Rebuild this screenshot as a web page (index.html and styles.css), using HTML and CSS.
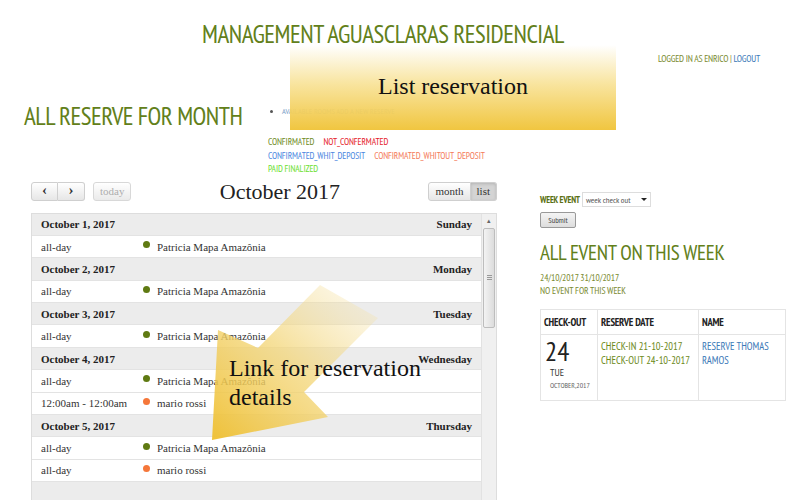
FILE: index.html
```html
<!DOCTYPE html>
<html>
<head>
<meta charset="utf-8">
<link rel="stylesheet" href="styles.css">
</head>
<body>
<div class="page">
  <h1 class="site-title">MANAGEMENT AGUASCLARAS RESIDENCIAL</h1>
  <div class="login">LOGGED IN AS ENRICO | <a class="link">LOGOUT</a></div>

  <div class="top-row">
    <h2 class="section-title">ALL RESERVE FOR MONTH</h2>
    <div class="top-side">
      <ul class="actions"><li><a class="link">AVAILABLE ROOMS</a> <a class="link">ADD A NEW RESERVE</a></li></ul>
      <div class="legend">
        <div><span class="lg-green">CONFIRMATED</span><span class="lg-red">NOT_CONFERMATED</span></div>
        <div><span class="lg-blue">CONFIRMATED_WHIT_DEPOSIT</span><span class="lg-orange">CONFIRMATED_WHITOUT_DEPOSIT</span></div>
        <div><span class="lg-lime">PAID FINALIZED</span></div>
      </div>
    </div>
  </div>

  <div class="main">
    <div class="calendar">
      <div class="toolbar">
        <div class="tb-left">
          <div class="btn-group">
            <span class="btn">&#8249;</span><span class="btn">&#8250;</span>
          </div>
          <span class="btn btn-disabled">today</span>
        </div>
        <div class="cal-title">October 2017</div>
        <div class="btn-group">
          <span class="btn">month</span><span class="btn btn-active">list</span>
        </div>
      </div>
      <div class="list-wrap">
        <div class="list">
          <div class="day"><span>October 1, 2017</span><span>Sunday</span></div>
          <div class="ev"><span>all-day</span><i class="dot green"></i><span>Patricia Mapa Amazônia</span></div>
          <div class="day"><span>October 2, 2017</span><span>Monday</span></div>
          <div class="ev"><span>all-day</span><i class="dot green"></i><span>Patricia Mapa Amazônia</span></div>
          <div class="day"><span>October 3, 2017</span><span>Tuesday</span></div>
          <div class="ev"><span>all-day</span><i class="dot green"></i><span>Patricia Mapa Amazônia</span></div>
          <div class="day"><span>October 4, 2017</span><span>Wednesday</span></div>
          <div class="ev"><span>all-day</span><i class="dot green"></i><span>Patricia Mapa Amazônia</span></div>
          <div class="ev"><span>12:00am - 12:00am</span><i class="dot orange"></i><span>mario rossi</span></div>
          <div class="day"><span>October 5, 2017</span><span>Thursday</span></div>
          <div class="ev"><span>all-day</span><i class="dot green"></i><span>Patricia Mapa Amazônia</span></div>
          <div class="ev"><span>all-day</span><i class="dot orange"></i><span>mario rossi</span></div>
          <div class="day"><span></span><span></span></div>
        </div>
        <div class="scrollbar">
          <div class="sb-arrow">&#9652;</div>
          <div class="sb-thumb"><span class="sb-grip"></span></div>
        </div>
      </div>
    </div>

    <div class="sidebar">
      <form class="week-form">
        <div class="week-row">
          <label class="week-label">WEEK EVENT</label>
          <span class="select">week check out <span class="caret"></span></span>
        </div>
        <span class="submit">Submit</span>
      </form>
      <h3 class="side-title">ALL EVENT ON THIS WEEK</h3>
      <div class="side-text first">24/10/2017 31/10/2017</div>
      <div class="side-text">NO EVENT FOR THIS WEEK</div>
      <table class="events">
        <thead>
          <tr><th class="c1">CHECK-OUT</th><th class="c2">RESERVE DATE</th><th class="c3">NAME</th></tr>
        </thead>
        <tbody>
          <tr>
            <td class="date-cell">
              <div class="big-day">24</div>
              <div class="wd">TUE</div>
              <div class="mon">OCTOBER,2017</div>
            </td>
            <td class="olive">CHECK-IN 21-10-2017<br>CHECK-OUT 24-10-2017</td>
            <td><a class="link">RESERVE THOMAS RAMOS</a></td>
          </tr>
        </tbody>
      </table>
    </div>
  </div>
</div>

<div class="note note-list"><span>List reservation</span></div>

<div class="note-arrow">
  <svg width="200" height="180" viewBox="200 280 200 180">
    <defs>
      <linearGradient id="ag" x1="1" y1="0" x2="0" y2="1">
        <stop offset="0" stop-color="#f5e2a8" stop-opacity="0.15"/>
        <stop offset="0.5" stop-color="#f3d679" stop-opacity="0.75"/>
        <stop offset="1" stop-color="#efbf2f" stop-opacity="0.95"/>
      </linearGradient>
    </defs>
    <polygon points="320,285 378,318 304,392 328,417 212,440 218,330 258,348" fill="url(#ag)"/>
  </svg>
  <div class="arrow-text">Link for reservation<br>details</div>
</div>
</body>
</html>
```

FILE: styles.css
```css
html { overflow: hidden; }
body {
  margin: 0;
  background: #fff;
  font-family: "PT Sans Narrow", "Liberation Sans Narrow", "DejaVu Sans Condensed", "Roboto Condensed", "Liberation Sans", sans-serif;
  color: #333;
}
.page { width: 800px; }
.link { color: #3d7ab8; text-decoration: none; }

.site-title {
  margin: 0;
  padding: 20px 0 0 202px;
  font-size: 25px;
  font-weight: normal;
  color: #62801a;
  line-height: 28px;
  letter-spacing: -0.5px;
}
.login {
  text-align: right;
  padding-right: 40px;
  margin-top: 5px;
  font-size: 9.5px;
  color: #7a8a30;
  line-height: 12px;
  letter-spacing: -0.2px;
}
.top-row {
  display: flex;
  padding-left: 24px;
  margin-top: 36px;
}
.section-title {
  margin: 0;
  width: 244px;
  font-size: 25px;
  font-weight: normal;
  line-height: 30px;
  color: #62801a;
  letter-spacing: -0.5px;
}
.actions {
  margin: 0;
  padding: 0 0 0 14px;
  font-size: 8px;
  line-height: 12px;
  color: #555;
  margin-top: 4px;
}
.actions .link { color: #7aa0c8; }
.legend {
  margin-top: 19px;
  font-size: 9.3px;
  line-height: 13.5px;
  letter-spacing: -0.1px;
}
.legend span { margin-right: 9px; }
.lg-green { color: #6d8a1c; }
.lg-red { color: #e5202a; }
.lg-blue { color: #4a86e0; }
.lg-orange { color: #f47a5a; }
.lg-lime { color: #6be030; }

.main {
  display: flex;
  margin-top: 5px;
  align-items: flex-start;
}
.calendar {
  width: 466px;
  margin-left: 31px;
  font-family: "Liberation Serif", serif;
}
.toolbar {
  display: flex;
  justify-content: space-between;
  align-items: center;
  height: 20px;
}
.tb-left { display: flex; gap: 8px; }
.btn-group { display: flex; }
.btn {
  display: inline-block;
  height: 19px;
  box-sizing: border-box;
  padding: 0 6px;
  font-size: 11px;
  line-height: 17px;
  color: #333;
  border: 1px solid #cfcfcf;
  background: linear-gradient(#fff, #e6e6e6);
  border-radius: 3px;
}
.btn-group .btn { border-radius: 0; }
.btn-group .btn:first-child { border-radius: 3px 0 0 3px; }
.btn-group .btn:last-child { border-radius: 0 3px 3px 0; border-left: 0; }
.tb-left .btn-group .btn { width: 27px; text-align: center; padding: 0; font-size: 15px; line-height: 15px; font-weight: bold; }
.btn-disabled { color: #999; opacity: 0.8; }
.btn-active { background: #d4d4d4; box-shadow: inset 0 1px 3px rgba(0,0,0,0.15); }
.cal-title {
  font-size: 22px;
  color: #222;
}

.list-wrap {
  display: flex;
  margin-top: 11px;
  border: 1px solid #ddd;
  height: 300px;
}
.list { flex: 1; overflow: hidden; }
.day, .ev {
  height: 22.4px;
  box-sizing: border-box;
  border-bottom: 1px solid #e3e3e3;
  font-size: 11px;
  display: flex;
  align-items: center;
  padding: 0 9px;
}
.day {
  background: #ececec;
  justify-content: space-between;
  font-weight: bold;
  color: #222;
}
.ev { background: #fff; color: #333; }
.ev span:first-child { width: 102px; }
.dot {
  width: 7px; height: 7px; border-radius: 50%;
  margin-right: 7px;
  position: relative; top: -2px;
}
.dot.green { background: #5f7a12; }
.dot.orange { background: #f5773a; }

.scrollbar {
  width: 14px;
  background: #f0f0f0;
  border-left: 1px solid #e2e2e2;
  display: flex;
  flex-direction: column;
  align-items: center;
}
.sb-arrow { font-size: 7px; color: #666; height: 14px; line-height: 14px; }
.sb-thumb {
  width: 10px;
  height: 98px;
  border: 1px solid #bdbdbd;
  background: linear-gradient(90deg, #f3f3f3, #dcdcdc);
  border-radius: 2px;
  display: flex;
  align-items: center;
  justify-content: center;
}
.sb-grip { width: 5px; height: 5px; border-top: 1px solid #999; border-bottom: 1px solid #999; box-sizing: border-box; position: relative; }
.sb-grip::after { content: ""; position: absolute; left: 0; right: 0; top: 1px; border-top: 1px solid #999; }

.sidebar {
  margin-left: 43px;
  width: 246px;
  padding-top: 10px;
}
.week-row { display: flex; align-items: center; gap: 2px; }
.week-label { font-size: 9px; font-weight: bold; color: #5a7012; letter-spacing: -0.2px; }
.select {
  display: inline-flex;
  align-items: center;
  justify-content: space-between;
  width: 69px;
  height: 15px;
  box-sizing: border-box;
  border: 1px solid #ddd;
  font-size: 8.5px;
  color: #555;
  padding: 0 3px;
  gap: 3px;
}
.caret { width: 0; height: 0; border-left: 3px solid transparent; border-right: 3px solid transparent; border-top: 3px solid #222; }
.submit {
  display: inline-block;
  margin-top: 4px;
  width: 36px;
  height: 16px;
  box-sizing: border-box;
  border: 1px solid #999;
  border-radius: 2px;
  background: linear-gradient(#f4f4f4, #ddd);
  font-size: 8px;
  color: #444;
  text-align: center;
  line-height: 14px;
}
.side-title {
  margin: 13px 0 0;
  font-size: 21px;
  font-weight: normal;
  color: #62801a;
  line-height: 24px;
  letter-spacing: -0.3px;
}
.side-text { font-size: 9.5px; color: #7a8a30; line-height: 13px; letter-spacing: -0.1px; }
.side-text.first { margin-top: 6px; }
.events {
  margin-top: 12px;
  width: 246px;
  border-collapse: collapse;
  border: 1px solid #e4e4e4;
}
.events th {
  text-align: left;
  color: #222;
  font-weight: bold;
  font-size: 10.5px;
  letter-spacing: -0.2px;
  height: 24px;
  padding: 0 3px;
  border: 1px solid #e4e4e4;
}
.events td {
  vertical-align: top;
  border: 1px solid #e4e4e4;
  padding: 3px 3px 9px;
  line-height: 14px;
  font-size: 10.5px;
}
.c1 { width: 50px; }
.c2 { width: 94px; }
.olive { color: #6d8a1c; }
.events td.olive, .events td:last-child { padding-top: 4px; }
.date-cell { padding-left: 4px !important; }
.big-day { font-size: 27px; line-height: 26px; color: #222; }
.wd { font-size: 10px; padding-left: 5px; line-height: 13px; margin-top: 2px; }
.mon { font-size: 7.5px; padding-left: 5px; color: #666; line-height: 12px; }

.note {
  position: absolute;
}
.note-list {
  left: 290px;
  top: 45px;
  width: 326px;
  height: 85px;
  background: linear-gradient(rgba(255,255,255,0.6), rgba(248,226,150,0.9) 45%, rgba(240,196,58,0.97));
  display: flex;
  align-items: center;
  justify-content: center;
  font-family: "Liberation Serif", serif;
  font-size: 24px;
  color: #111;
}
.note-list span { position: relative; top: -1px; }
.note-arrow {
  position: absolute;
  left: 200px;
  top: 280px;
  width: 200px;
  height: 180px;
}
.note-arrow svg { position: absolute; left: 0; top: 0; }
.arrow-text {
  position: absolute;
  left: 29px;
  top: 74px;
  font-family: "Liberation Serif", serif;
  font-size: 24px;
  line-height: 29px;
  color: #111;
  white-space: nowrap;
}
```
